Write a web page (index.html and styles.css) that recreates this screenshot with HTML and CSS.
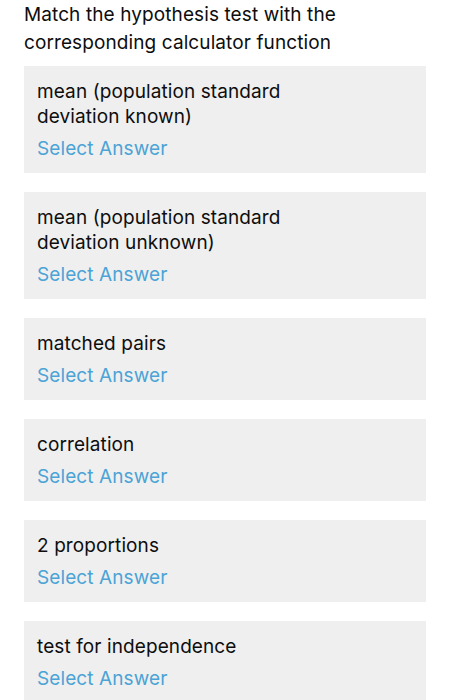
FILE: index.html
```html
<!DOCTYPE html>
<html>
<head>
  <title>Match the hypothesis test</title>
  <link rel="stylesheet" href="styles.css">
</head>

<body>
  <main class="question">
    <p class="question__title">Match the hypothesis test with the corresponding calculator function</p>

    <ul class="match-list">
      <li class="match-list__item">
        <span class="match-list__label">mean (population standard<br>deviation known)</span>
        <a class="match-list__answer" href="#">Select Answer</a>
      </li>
      <li class="match-list__item">
        <span class="match-list__label">mean (population standard<br>deviation unknown)</span>
        <a class="match-list__answer" href="#">Select Answer</a>
      </li>
      <li class="match-list__item">
        <span class="match-list__label">matched pairs</span>
        <a class="match-list__answer" href="#">Select Answer</a>
      </li>
      <li class="match-list__item">
        <span class="match-list__label">correlation</span>
        <a class="match-list__answer" href="#">Select Answer</a>
      </li>
      <li class="match-list__item">
        <span class="match-list__label">2 proportions</span>
        <a class="match-list__answer" href="#">Select Answer</a>
      </li>
      <li class="match-list__item">
        <span class="match-list__label">test for independence</span>
        <a class="match-list__answer" href="#">Select Answer</a>
      </li>
    </ul>
  </main>
</body>

</html>
```

FILE: styles.css
```css
* {
  box-sizing: border-box;
}

body {
  margin: 0;
  font-family: Inter, "Liberation Sans", Arial, sans-serif;
  font-size: 19px;
  letter-spacing: 0.1px;
  color: #0d0d0d;
  background-color: #ffffff;
}

a {
  color: #4ba3d6;
  text-decoration: none;
}

.question {
  padding: 1px 25px 0 24px;
}

.question__title {
  margin: 0 0 9px;
  line-height: 28px;
}

.match-list {
  list-style: none;
  padding: 0;
  margin: 0;
  display: flex;
  flex-direction: column;
  gap: 19px;
}

.match-list__item {
  background-color: #efefef;
  padding: 13px 13px 11px;
  display: flex;
  flex-direction: column;
  align-items: flex-start;
}

.match-list__label {
  line-height: 25px;
}

.match-list__answer {
  margin-top: 6px;
  line-height: 27px;
}
```
